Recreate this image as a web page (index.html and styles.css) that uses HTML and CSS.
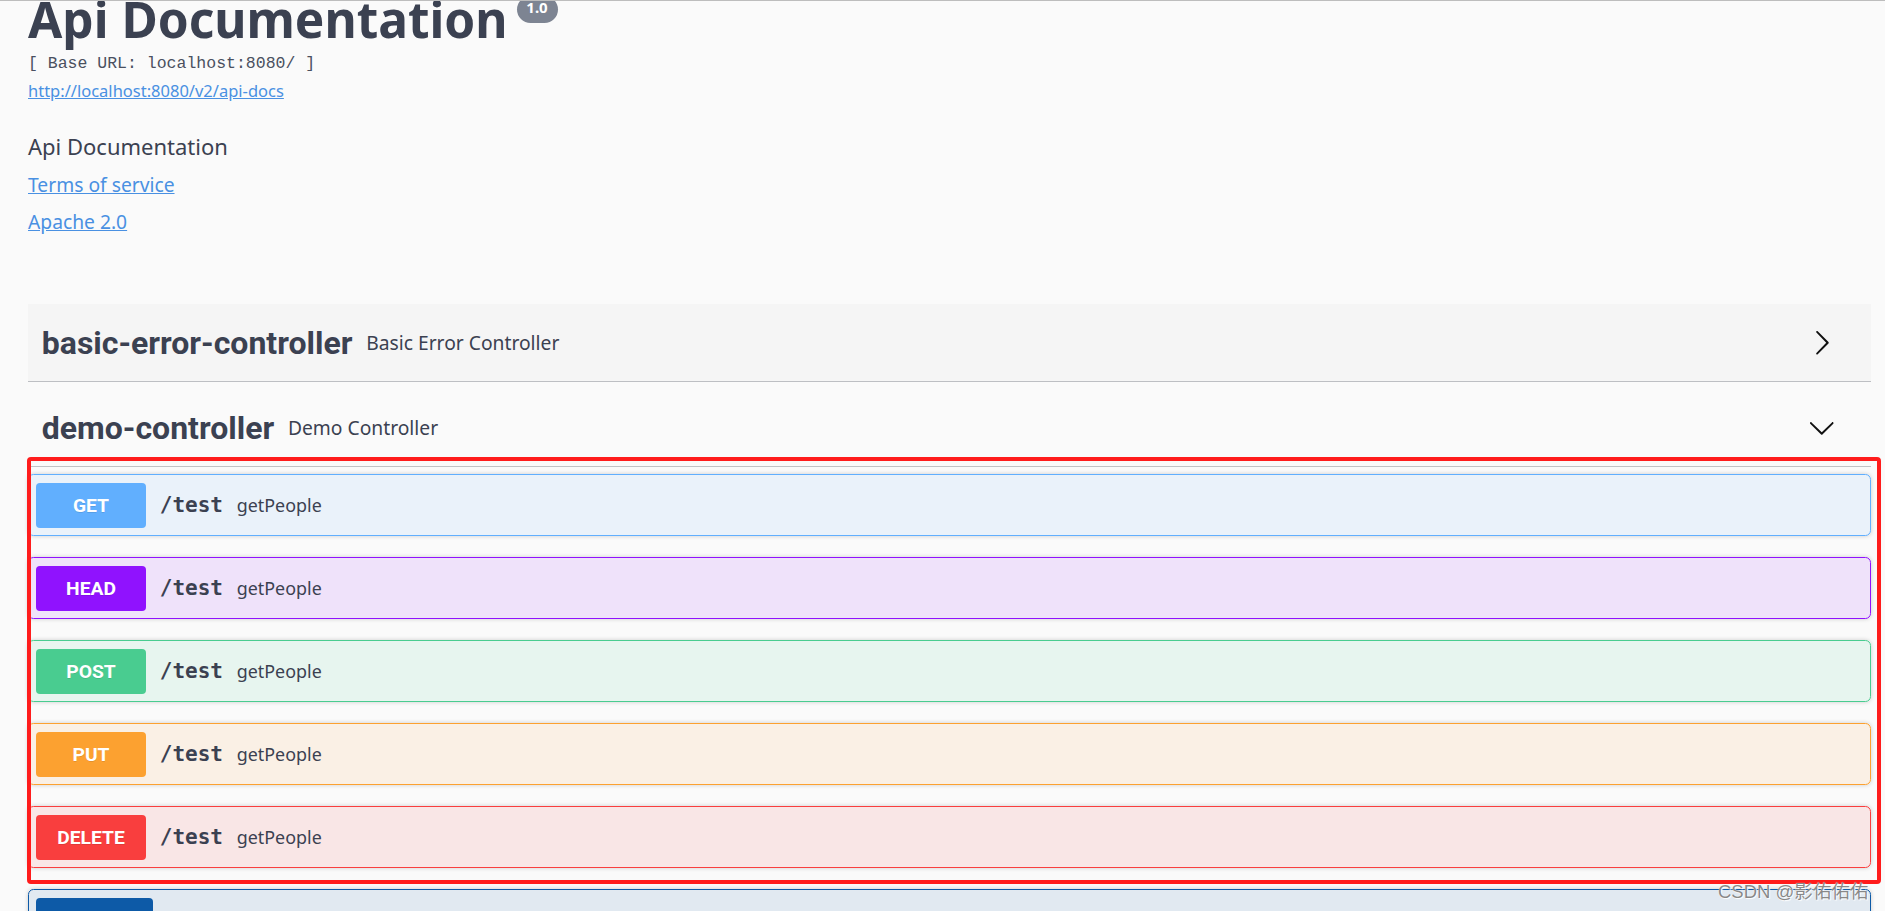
FILE: index.html
```html
<!DOCTYPE html>
<html lang="en">
<head>
<meta charset="utf-8">
<title>Swagger UI</title>
<link rel="stylesheet" href="styles.css">
</head>
<body>
<div class="topline"></div>
<div class="wrapper">
  <section class="info">
    <div class="title-row">
      <h2 class="title">Api Documentation</h2>
      <span class="version">1.0</span>
    </div>
    <div class="base-url">[ Base URL: localhost:8080/ ]</div>
    <a class="url" href="#">http://localhost:8080/v2/api-docs</a>
    <p class="desc">Api Documentation</p>
    <a class="link" href="#">Terms of service</a>
    <a class="link" href="#">Apache 2.0</a>
  </section>

  <section class="tags">
    <div class="tag tag-hover">
      <h4 class="tag-title">basic-error-controller</h4>
      <small class="tag-desc">Basic Error Controller</small>
      <button class="expand" type="button">
        <svg class="arrow" viewBox="0 0 20 20"><path d="M13.25 10L6.109 2.58c-.268-.27-.268-.707 0-.979.268-.27.701-.27.969 0l7.83 7.908c.268.271.268.709 0 .979l-7.830 7.908c-.268.271-.701.27-.969 0-.268-.269-.268-.707 0-.979L13.25 10z"/></svg>
      </button>
    </div>
    <div class="tag">
      <h4 class="tag-title">demo-controller</h4>
      <small class="tag-desc">Demo Controller</small>
      <button class="expand" type="button">
        <svg class="arrow" viewBox="0 0 20 20"><path d="M17.418 6.109c.272-.268.709-.268.979 0s.271.701 0 .969l-7.908 7.83c-.27.268-.707.268-.979 0l-7.908-7.830c-.27-.268-.27-.701 0-.969.271-.268.709-.268.979 0L10 13.25l7.418-7.141z"/></svg>
      </button>
    </div>

    <div class="ops">
      <div class="opblock op-get">
        <div class="summary"><span class="method">GET</span><span class="path">/test</span><span class="opdesc">getPeople</span></div>
      </div>
      <div class="opblock op-head">
        <div class="summary"><span class="method">HEAD</span><span class="path">/test</span><span class="opdesc">getPeople</span></div>
      </div>
      <div class="opblock op-post">
        <div class="summary"><span class="method">POST</span><span class="path">/test</span><span class="opdesc">getPeople</span></div>
      </div>
      <div class="opblock op-put">
        <div class="summary"><span class="method">PUT</span><span class="path">/test</span><span class="opdesc">getPeople</span></div>
      </div>
      <div class="opblock op-delete">
        <div class="summary"><span class="method">DELETE</span><span class="path">/test</span><span class="opdesc">getPeople</span></div>
      </div>
      <div class="opblock op-options">
        <div class="summary"><span class="method"></span></div>
      </div>
    </div>
  </section>
</div>
<div class="annotation"></div>
<div class="watermark">CSDN @影佑佑佑</div>
</body>
</html>
```
FILE: styles.css
```css
html, body {
  margin: 0;
  padding: 0;
}

body {
  background: #fafafa;
  color: #3b4151;
  font-family: "Noto Sans", "Open Sans", sans-serif;
  overflow: hidden;
  height: 911px;
}

.topline {
  position: fixed;
  top: 0;
  left: 0;
  right: 0;
  height: 1px;
  background: #bdbdbd;
  z-index: 5;
}

.wrapper {
  padding: 0 14px 0 28px;
}

/* ---------- info ---------- */
.info {
  display: flex;
  flex-direction: column;
  align-items: flex-start;
  margin-top: -9.4px;
}

.title-row {
  display: flex;
  align-items: flex-start;
}

.title {
  margin: 0;
  font-size: 49.6px;
  line-height: 56px;
  font-weight: 700;
  color: #3b4151;
}

.version {
  margin: 5.4px 0 0 9px;
  width: 41px;
  height: 27px;
  line-height: 23px;
  text-align: center;
  border-radius: 14px;
  background: #7d8492;
  color: #fff;
  font-size: 15px;
  font-weight: 700;
}

.base-url {
  margin-top: 7px;
  font-family: "Liberation Mono", monospace;
  font-size: 16.5px;
  line-height: 20px;
  color: #4a5060;
}

.url {
  display: block;
  margin-top: 6px;
  font-size: 16.5px;
  line-height: 22px;
  color: #4990e2;
}

.desc {
  margin: 29px 0 0;
  font-size: 22px;
  line-height: 30px;
}

.link {
  display: block;
  margin-top: 11px;
  font-size: 19.25px;
  line-height: 26px;
  color: #4990e2;
}

/* ---------- tags ---------- */
.tags {
  margin-top: 69.5px;
}

.tag {
  display: flex;
  align-items: center;
  padding: 13.75px 27.5px 13.75px 13.75px;
  border-bottom: 1px solid rgba(59, 65, 81, .3);
  margin-bottom: 7px;
}

.tag-hover {
  background: rgba(0, 0, 0, .02);
}

.tag-title {
  margin: 0;
  padding-top: 2px;
  font-family: Roboto, "Noto Sans", sans-serif;
  font-size: 32px;
  line-height: 47.5px;
  font-weight: 700;
  color: #3b4151;
}

.tag-desc {
  flex: 1;
  padding: 0 13.75px;
  font-size: 19.25px;
  color: #3b4151;
}

.expand {
  background: none;
  border: 0;
  padding: 1.4px 8.25px;
  display: flex;
}

.arrow {
  width: 27.5px;
  height: 27.5px;
  fill: #111;
}

/* ---------- operations ---------- */
.opblock {
  border: 1px solid #000;
  border-radius: 5.5px;
  margin-bottom: 21px;
  box-shadow: 0 0 4px rgba(0, 0, 0, .19);
}

.summary {
  display: flex;
  align-items: center;
  padding: 7.5px 7px;
}

.method {
  box-sizing: border-box;
  min-width: 110px;
  height: 45px;
  padding: 8px 20px;
  line-height: 29px;
  text-align: center;
  border-radius: 4px;
  color: #fff;
  font-family: Roboto, "Noto Sans", sans-serif;
  font-size: 19.25px;
  font-weight: 700;
  text-shadow: 0 1px 0 rgba(0, 0, 0, .1);
}

.path {
  padding: 0 13.75px;
  font-family: "DejaVu Sans Mono", monospace;
  font-weight: 700;
  font-size: 21px;
  color: #3b4151;
}

.opdesc {
  flex: 1;
  font-size: 17.9px;
  color: #3b4151;
}

.op-get { border-color: #61affe; background: rgba(97, 175, 254, .1); }
.op-get .method { background: #61affe; }

.op-head { border-color: #9012fe; background: rgba(144, 18, 254, .1); }
.op-head .method { background: #9012fe; }

.op-post { border-color: #49cc90; background: rgba(73, 204, 144, .1); }
.op-post .method { background: #49cc90; }

.op-put { border-color: #fca130; background: rgba(252, 161, 48, .1); }
.op-put .method { background: #fca130; }

.op-delete { border-color: #f93e3e; background: rgba(249, 62, 62, .1); }
.op-delete .method { background: #f93e3e; }

.op-options { border-color: #0d5aa7; background: rgba(13, 90, 167, .1); }
.op-options .method { background: #0d5aa7; min-width: 117px; }

/* ---------- screenshot overlays ---------- */
.annotation {
  position: absolute;
  left: 27px;
  top: 457px;
  width: 1854px;
  height: 427px;
  box-sizing: border-box;
  border: 4px solid #ff1c1c;
  border-radius: 4px;
  z-index: 4;
}

.watermark {
  position: absolute;
  left: 1718px;
  top: 880px;
  font-family: "Liberation Sans", "Noto Sans CJK SC", sans-serif;
  font-size: 18.5px;
  line-height: 24px;
  color: rgba(115, 115, 115, .85);
  text-shadow: 0 0 1px #fff, 1px 1px 1px #fff;
  white-space: nowrap;
  z-index: 6;
}
```
